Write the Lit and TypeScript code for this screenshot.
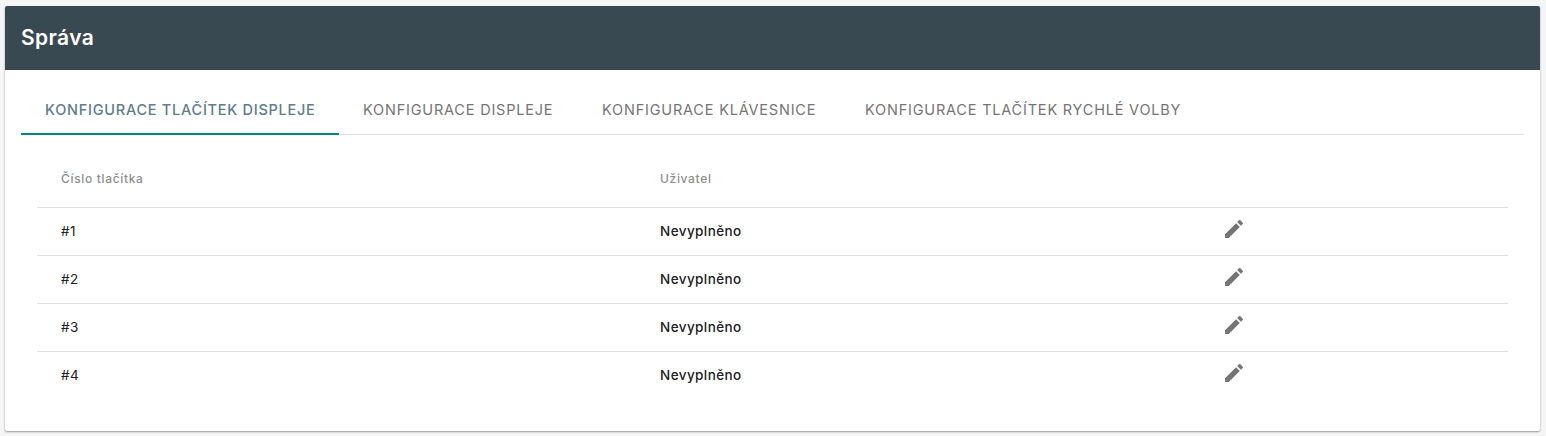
import { LitElement, html, css } from "lit";
import { customElement } from "lit/decorators.js";

const TABS = [
  "KONFIGURACE TLAČÍTEK DISPLEJE",
  "KONFIGURACE DISPLEJE",
  "KONFIGURACE KLÁVESNICE",
  "KONFIGURACE TLAČÍTEK RYCHLÉ VOLBY",
];
const ROWS = ["#1", "#2", "#3", "#4"];

@customElement("app-root")
export class AppRoot extends LitElement {
  static styles = css`
    :host {
      display: block;
      box-sizing: border-box;
      width: 1546px;
      height: 436px;
      padding: 6px 6px 5px 5px;
      background: #f5f5f5;
      font-family: "Inter", "Liberation Sans", sans-serif;
      overflow: hidden;
    }
    .card {
      height: 425px;
      background: #fff;
      border-radius: 2px;
      box-shadow: 0 1px 2px rgba(0, 0, 0, 0.4);
      overflow: hidden;
    }
    .head {
      box-sizing: border-box;
      height: 64px;
      padding: 0 0 2px 16px;
      background: #394951;
      color: #fff;
      display: flex;
      align-items: center;
      font-size: 21px;
      font-weight: 600;
      letter-spacing: 0.4px;
    }
    .tabs {
      display: flex;
      margin: 16px 16px 0;
      height: 49px;
      box-sizing: border-box;
      border-bottom: 1px solid #e0e0e0;
    }
    .tab {
      box-sizing: border-box;
      height: 49px;
      padding: 0 24px 2px;
      display: flex;
      align-items: center;
      font-size: 14.5px;
      font-weight: 400;
      letter-spacing: 0.8px;
      color: #757575;
      white-space: nowrap;
    }
    .tab.active {
      color: #607d8b;
      border-bottom: 2px solid #00897b;
      padding-bottom: 0;
      font-weight: 500;
      letter-spacing: 0.74px;
    }
    .tab-0 { width: 318px; }
    .tab-1 { width: 239px; }
    .tab-2 { width: 263px; }
    .tab-3 { width: 364px; }
    .table {
      margin: 0 32px;
    }
    .row {
      display: grid;
      grid-template-columns: 623px 562px 1fr;
      align-items: center;
      height: 48px;
      padding-bottom: 2px;
      border-top: 1px solid #e0e0e0;
      box-sizing: border-box;
      font-size: 13.5px;
      font-weight: 400;
      letter-spacing: 0.5px;
      color: #212121;
    }
    .row.header {
      height: 72px;
      padding: 15px 0 0;
      border-top: 0;
      font-size: 12px;
      font-weight: 500;
      letter-spacing: 0.66px;
      color: #8e8e8e;
    }
    .c1 { padding-left: 24px; }
    .user {
      font-weight: 500;
      letter-spacing: 0.42px;
    }
    .row.header .user {
      letter-spacing: inherit;
    }
    .icon {
      display: block;
      width: 24px;
      height: 24px;
      margin-top: -3px;
      fill: #757575;
    }
  `;

  render() {
    return html`
      <div class="card">
        <div class="head">Správa</div>
        <div class="tabs">
          ${TABS.map(
            (t, i) =>
              html`<div class="tab tab-${i} ${i === 0 ? "active" : ""}">${t}</div>`
          )}
        </div>
        <div class="table">
          <div class="row header">
            <div class="c1">Číslo tlačítka</div>
            <div class="user">Uživatel</div>
            <div></div>
          </div>
          ${ROWS.map(
            (r) => html`
              <div class="row">
                <div class="c1">${r}</div>
                <div class="user">Nevyplněno</div>
                <div>
                  <svg class="icon" viewBox="0 0 24 24">
                    <path
                      d="M3 17.25V21h3.75L17.81 9.94l-3.75-3.75L3 17.25zM20.71 7.04a1 1 0 0 0 0-1.41l-2.34-2.34a1 1 0 0 0-1.41 0l-1.83 1.83 3.75 3.75 1.83-1.83z"
                    />
                  </svg>
                </div>
              </div>
            `
          )}
        </div>
      </div>
    `;
  }
}
